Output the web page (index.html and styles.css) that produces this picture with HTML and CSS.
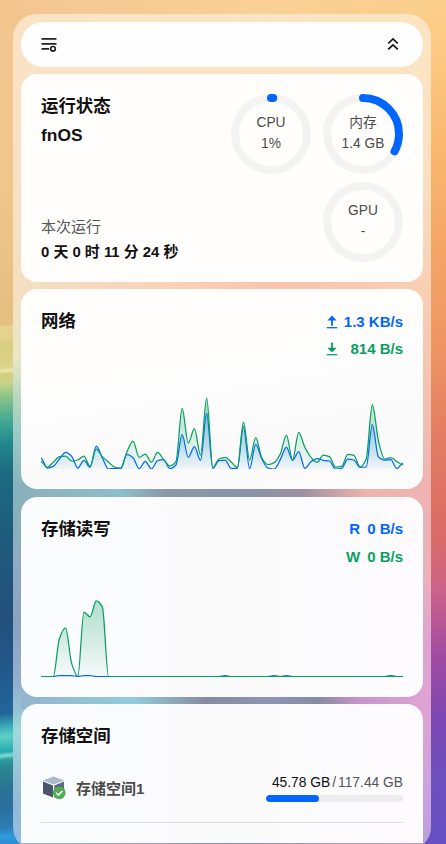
FILE: index.html
```html
<!DOCTYPE html>
<html lang="zh-CN">
<head>
    <meta charset="UTF-8">
    <meta name="viewport" content="width=device-width, initial-scale=1.0">
    <title>fnOS</title>
    <link rel="stylesheet" href="styles.css">
</head>
<body>
<div class="panel">
    <div class="panel-scroll">
        <div class="toolbar">
            <svg width="16" height="16" viewBox="0 0 16 16" fill="none" stroke="#222" stroke-width="1.7">
                <path d="M.5 2.8h15M.5 7.8h15M.5 12.8h7.6"/>
                <circle cx="12" cy="12.8" r="2.3"/>
            </svg>
            <svg class="collapse" width="12" height="14" viewBox="0 0 12 14" fill="none" stroke="#111" stroke-width="1.7">
                <path d="M1.2 6.5 6 2l4.8 4.5M1.2 12.3 6 7.8l4.8 4.5"/>
            </svg>
        </div>

        <div class="card status">
            <div class="status-info">
                <h2>运行状态</h2>
                <div class="host">fnOS</div>
                <div class="uptime-label">本次运行</div>
                <div class="uptime">0 天 0 时 11 分 24 秒</div>
            </div>
            <div class="rings">
                <div class="ring">
                    <svg width="80" height="80" viewBox="0 0 80 80">
                        <circle class="track" cx="40" cy="40" r="36"/>
                        <circle class="value" cx="40" cy="40" r="36" pathLength="100" stroke-dasharray="1 99"/>
                    </svg>
                    <div class="ring-text"><span>CPU</span><span>1%</span></div>
                </div>
                <div class="ring">
                    <svg width="80" height="80" viewBox="0 0 80 80">
                        <circle class="track" cx="40" cy="40" r="36"/>
                        <circle class="value" cx="40" cy="40" r="36" pathLength="100" stroke-dasharray="33 67"/>
                    </svg>
                    <div class="ring-text"><span>内存</span><span>1.4 GB</span></div>
                </div>
                <div class="ring gpu">
                    <svg width="80" height="80" viewBox="0 0 80 80">
                        <circle class="track" cx="40" cy="40" r="36"/>
                    </svg>
                    <div class="ring-text"><span>GPU</span><span>-</span></div>
                </div>
            </div>
        </div>

        <div class="card tint network">
            <div class="card-head">
                <h2>网络</h2>
                <div class="rates net-rates">
                    <div class="rate blue">
                        <svg width="12" height="14" viewBox="0 0 12 14">
                            <path d="M6 .5 10.6 5.4H6.9v5.4H5.1V5.4H1.4z" fill="currentColor"/>
                            <path d="M.8 12.7h10.4" stroke="currentColor" stroke-width="1.3"/>
                        </svg>
                        <span>1.3 KB/s</span>
                    </div>
                    <div class="rate green">
                        <svg width="12" height="14" viewBox="0 0 12 14">
                            <path d="M6 10.6 1.4 5.8h3.7V.6h1.8v5.2h3.7z" fill="currentColor"/>
                            <path d="M.8 12.7h10.4" stroke="currentColor" stroke-width="1.3"/>
                        </svg>
                        <span>814 B/s</span>
                    </div>
                </div>
            </div>
            <svg class="chart" id="net-chart" width="362" height="89" viewBox="0 0 362 89"></svg>
        </div>

        <div class="card tint disk">
            <div class="card-head">
                <h2>存储读写</h2>
                <div class="rates disk-rates">
                    <div class="rate blue"><b>R</b><span>0 B/s</span></div>
                    <div class="rate green"><b>W</b><span>0 B/s</span></div>
                </div>
            </div>
            <svg class="chart" id="disk-chart" width="362" height="89" viewBox="0 0 362 89"></svg>
        </div>

        <div class="card tint storage">
            <h2>存储空间</h2>
            <div class="volume">
                <svg class="volume-icon" width="24" height="24" viewBox="0 0 24 24">
                    <path d="M1 4.6 11.7.5 22 4.6 11.7 8.4z" fill="#a9b8cc"/>
                    <path d="M1 5.6 11 9.4v12.2L1 17.6z" fill="#49566a"/>
                    <path d="M22 5.6 12.3 9.4v12.2L22 17.6z" fill="#5a6a80"/>
                    <circle cx="17.2" cy="16.8" r="6.4" fill="#55aa55"/>
                    <path d="M14.2 16.8l2.2 2.2 3.9-4" fill="none" stroke="#fff" stroke-width="1.6"/>
                </svg>
                <div class="volume-name">存储空间1</div>
                <div class="usage">
                    <div class="usage-text"><span class="used">45.78 GB</span><i>/</i><span>117.44 GB</span></div>
                    <div class="bar"><div class="bar-fill" style="width: 38.98%"></div></div>
                </div>
            </div>
        </div>
    </div>
</div>
<script>
    const netDown = [23,5,20,37,39,24,27,39,8,60,37,21,6,3,51,84,35,45,20,50,28,9,22,182,78,121,42,213,4,30,35,21,4,141,27,94,33,13,19,45,102,27,110,65,35,20,42,37,6,8,44,41,6,30,193,84,30,34,22,13];
    const netUp = [33,3,8,30,50,38,3,26,5,69,33,0,2,1,44,34,1,23,0,25,28,1,12,103,35,67,26,168,2,25,27,2,2,127,1,74,30,3,0,28,66,26,52,2,22,31,26,24,0,2,30,27,5,6,133,36,27,28,1,18];
    const diskWrite = new Array(60).fill(0);
    [0,0,0,114,146,39,1,193,179,227,209,0].forEach((v, i) => diskWrite[i] = v);
    const diskRead = new Array(60).fill(0);
    [3,4,5,7,8,30,38,40,57].forEach(i => diskRead[i] = 3);

    // Monotone cubic path through evenly spaced samples
    function linePath(data, base) {
        const step = 362 / (data.length - 1);
        const y = data.map(v => base - v / 3);
        const slope = y.map((v, i) => {
            if (i === 0 || i === y.length - 1) return 0;
            const a = v - y[i - 1], b = y[i + 1] - v;
            return a * b <= 0 ? 0 : 2 * a * b / (a + b);
        });
        let d = `M0 ${y[0]}`;
        for (let i = 1; i < y.length; i++) {
            const x0 = (i - 1) * step, x1 = i * step;
            d += `C${x0 + step / 3} ${y[i - 1] + slope[i - 1] / 3} ${x1 - step / 3} ${y[i] - slope[i] / 3} ${x1} ${y[i]}`;
        }
        return d;
    }

    function drawChart(id, series, base) {
        const svg = document.getElementById(id);
        let html = "";
        series.forEach((s, i) => {
            const d = linePath(s.data, base);
            const top = base - Math.max(...s.data) / 3;
            html += `<linearGradient id="${id}-${i}" gradientUnits="userSpaceOnUse" x1="0" y1="${top}" x2="0" y2="${base}">
                <stop offset="0" stop-color="${s.color}" stop-opacity="0.32"/>
                <stop offset="1" stop-color="${s.color}" stop-opacity="0.02"/></linearGradient>
                <path d="${d}V${base}H0Z" fill="url(#${id}-${i})"/>
                <path d="${d}" fill="none" stroke="${s.color}" stroke-width="1.25"/>`;
        });
        svg.innerHTML = html;
    }

    drawChart("net-chart", [
        { data: netUp, color: "#0066ff" },
        { data: netDown, color: "#0a9f62" }
    ], 89);
    drawChart("disk-chart", [
        { data: diskRead, color: "#0066ff" },
        { data: diskWrite, color: "#0a9f62" }
    ], 88.5);
</script>
</body>
</html>
```

FILE: styles.css
```css
* {
    box-sizing: border-box;
}
body {
    margin: 0;
    height: 844px;
    padding: 14px 15px 0 13px;
    overflow: hidden;
    font-family: "Liberation Sans", Arial, "Noto Sans CJK SC", sans-serif;
    font-size: 15px;
    color: #111;
    background:
        linear-gradient(90deg, #f3c690, #f9d095 60%, #fbcf8c) 13px 0 / 418px 14px no-repeat,
        linear-gradient(174deg, #f3c690 0, #efc68a 200px, #e3bf80 323px, #e6d391 326px, #e3d18b 338px, #d8cd80 342px, #dcd48a 366px, #ece7ad 369px, #d5cd7e 373px, #c4d488 382px, #8fc586 394px, #45a994 418px, #22878c 442px, #1d6b80 470px, #1f5b7c 535px, #22507b 615px, #23588a 665px, #22659a 710px, #35a8b4 722px, #5ed0c6 733px, #27a9b0 748px, #7fdcd0 752px, #2c9aa0 756px, #2c8790 764px, #2a7392 785px, #2b6f9f 805px, #2d80b5 825px, #2f9ae0 832px, #2b82c6 848px) 0 0 / 223px 100% no-repeat,
        linear-gradient(172deg, #fbd391 0, #fdc983 80px, #f9b76e 180px, #f4a566 280px, #ee9464 380px, #e27a62 470px, #da6c66 560px, #cc6288 615px, #a14ba2 680px, #7e46b2 740px, #6c50be 800px, #6550c4 870px) 223px 0 / 223px 100% no-repeat;
}
h2 {
    margin: 0;
    font-size: 17.4px;
    line-height: 26px;
    font-weight: bold;
}
.panel {
    width: 418px;
    height: 837px;
    padding: 8px;
    border-radius: 24px;
    background:
        linear-gradient(90deg, #fae2c5, #fce4c2) 0 0 / 100% 62px no-repeat,
        linear-gradient(90deg, #f4dfc2, #f9d3b9 35%, #f8c4ac 65%, #f8d0b4) 8px 266px / 402px 12px no-repeat,
        linear-gradient(90deg, #8bb0bb, #8fbdcc 25%, #8a98a8 36%, #8794a8 56%, #9d8fa0 70%, #efb5ac 86%, #eeb4b2) 8px 470px / 402px 18px no-repeat,
        linear-gradient(90deg, #94b4cd, #91cbdc 28%, #888b9f 46%, #8b95b4 62%, #888aa4 74%, #c595c9 84%, #dda3d3) 8px 678px / 402px 17px no-repeat,
        linear-gradient(90deg, #98b6d8, #8b8fab 50%, #b69bd7) 8px 829px / 402px 8px no-repeat,
        linear-gradient(#fae2c5, #f5dfc2 270px, #e9e7c6 345px, #b7d6bf 385px, #9bccc4 417px, #86b2ba 472px, #8dabc0 540px, #8ba2bf 610px, #93aece 668px, #95c5d3 698px, #9ed9dc 718px, #98c5d9 750px, #93b8d6 790px, #92bfe4) 0 0 / 50% 100% no-repeat,
        linear-gradient(#fce4c2, #fbdfc0 160px, #f9cdb1 290px, #f4c2b0 380px, #eeb2b1 480px, #ebb1ba 560px, #dda3d0 630px, #dea3d4 700px, #caa2df 780px, #b79ddf) 100% 0 / 50% 100% no-repeat;
}
.panel-scroll {
    height: 821px;
    overflow: hidden;
    display: flex;
    flex-direction: column;
    gap: 7.5px;
}
.toolbar {
    flex: none;
    height: 44.5px;
    padding: 0 24px 0 20px;
    display: flex;
    align-items: center;
    justify-content: space-between;
    background: #fffefe;
    border-radius: 22px;
}
.card {
    flex: none;
    padding: 20px;
    border-radius: 16px;
    background: #fffefd;
}
.tint {
    height: 200px;
    background: linear-gradient(90deg, #fbfcfe, #fafafb 50%, #fdfbfd);
}
.tint.network {
    background: linear-gradient(170deg, #fffefd 30%, #fafafb 72%, #fbfbfc);
}
.status {
    height: 207.5px;
    display: flex;
    justify-content: space-between;
}
.status-info {
    display: flex;
    flex-direction: column;
    margin-top: -1px;
}
.host {
    font-size: 17.4px;
    line-height: 26px;
    font-weight: bold;
    margin-top: 3px;
}
.uptime-label {
    margin-top: auto;
    line-height: 24px;
    color: #555;
}
.uptime {
    line-height: 24px;
    margin: 1px 0 -2px;
    font-weight: bold;
    font-size: 14.9px;
}
.rings {
    display: grid;
    grid-template-columns: 80px 80px;
    grid-auto-rows: 80px;
    gap: 8px 12px;
}
.ring {
    display: grid;
}
.ring > * {
    grid-area: 1 / 1;
}
.ring svg {
    transform: rotate(-90deg);
}
.ring circle {
    fill: none;
    stroke-width: 8;
}
.ring .track {
    stroke: #f3f3f3;
}
.ring .value {
    stroke: #0066ff;
    stroke-linecap: round;
}
.ring-text {
    display: flex;
    flex-direction: column;
    align-items: center;
    justify-content: center;
    padding-bottom: 2px;
    font-size: 13.75px;
    line-height: 21px;
    color: #4b4b4b;
}
.gpu {
    grid-column: 2;
}
.card-head {
    display: flex;
    justify-content: space-between;
    height: 72px;
    margin-top: -1px;
}
.rates {
    display: flex;
    flex-direction: column;
    align-items: flex-end;
    font-weight: bold;
    line-height: 20px;
    padding-top: 3px;
}
.net-rates {
    align-items: stretch;
    gap: 7px;
    padding-top: 4px;
}
.disk-rates {
    gap: 8px;
}
.rate {
    display: flex;
    align-items: center;
    justify-content: space-between;
    gap: 7px;
}
.net-rates .rate {
    gap: 6px;
}
.blue {
    color: #0066ff;
}
.green {
    color: #0a9f62;
}
.chart {
    display: block;
}
.storage {
    height: 220px;
}
.storage h2 {
    margin-top: -1px;
}
.volume {
    display: flex;
    align-items: center;
    height: 74px;
    padding-top: 4px;
    border-bottom: 1px solid #dcdde0;
}
.volume-icon {
    margin-left: 1px;
}
.volume-name {
    margin-left: 10px;
    font-weight: bold;
    color: #4b4b4b;
}
.usage {
    margin-left: auto;
    width: 137px;
}
.usage-text {
    display: flex;
    justify-content: flex-end;
    font-size: 13.8px;
    line-height: 20px;
    color: #555;
    white-space: nowrap;
}
.usage-text i {
    font-style: normal;
    margin: 0 2px;
}
.used {
    color: #111;
}
.bar {
    height: 7px;
    margin-top: 2px;
    border-radius: 4px;
    background: #ededef;
    overflow: hidden;
}
.bar-fill {
    height: 100%;
    border-radius: 4px;
    background: #0066ff;
}
```
